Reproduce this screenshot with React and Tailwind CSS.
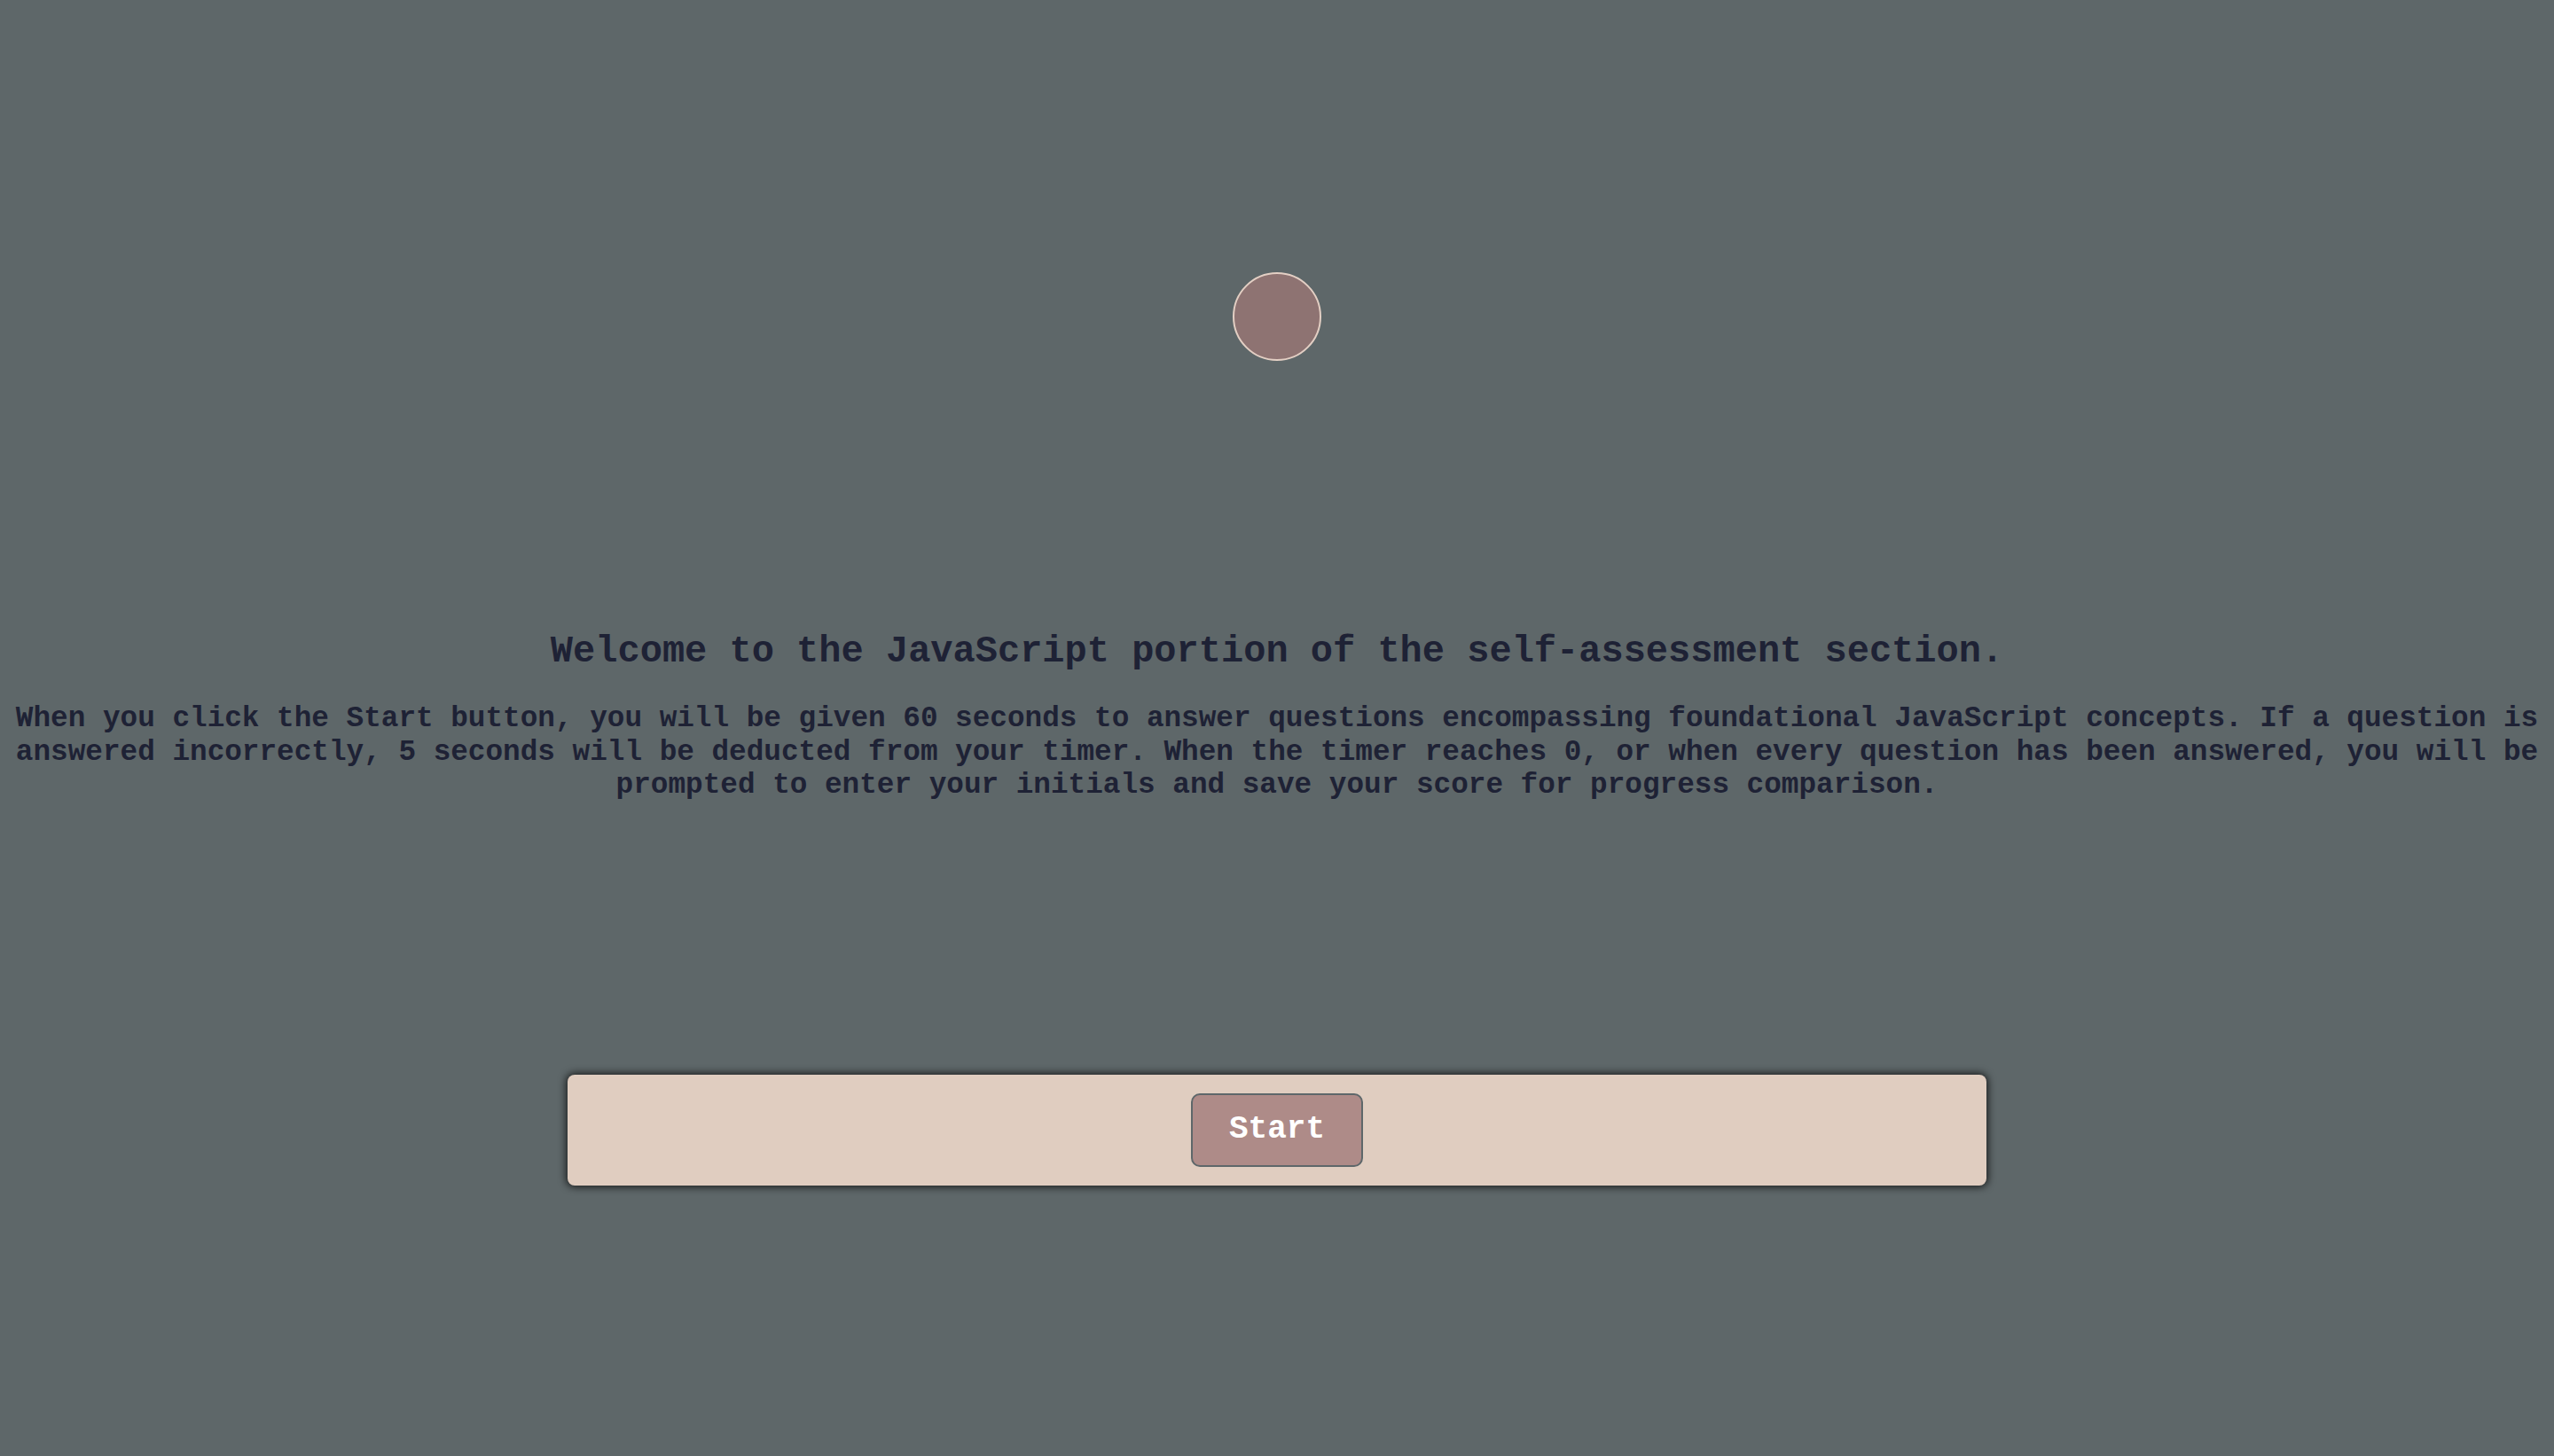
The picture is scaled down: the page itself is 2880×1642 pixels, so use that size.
import React from "react";

export default function App() {
  return (
    <div className="min-h-[1642px] w-full bg-[#5e6769] font-['Liberation_Mono',monospace] text-[#1e2235]">
      <div className="flex flex-col items-center">
        {/* status dot */}
        <div className="mt-[307px] h-[100px] w-[100px] rounded-full border-2 border-[#e3cfc4] bg-[#8e7372]" />

        <h1 className="mt-[304px] text-center text-[42px] font-bold leading-[48px]">
          Welcome to the JavaScript portion of the self-assessment section.
        </h1>

        <p className="mt-[33px] w-full px-2 text-center text-[32.7px] font-bold leading-[37.5px]">
          When you click the Start button, you will be given 60 seconds to answer questions
          encompassing foundational JavaScript concepts. If a question is answered incorrectly, 5
          seconds will be deducted from your timer. When the timer reaches 0, or when every question
          has been answered, you will be prompted to enter your initials and save your score for
          progress comparison.
        </p>

        <div className="mt-[307px] flex h-[125px] w-[1600px] items-center justify-center rounded-lg bg-[#e0cdc0] shadow-[0_0_8px_2px_rgba(0,0,0,0.7)]">
          <button className="h-[83px] w-[194px] rounded-[10px] border-2 border-[#5e676a] bg-[#ae8b88] text-[36px] font-bold text-white">
            Start
          </button>
        </div>
      </div>
    </div>
  );
}
